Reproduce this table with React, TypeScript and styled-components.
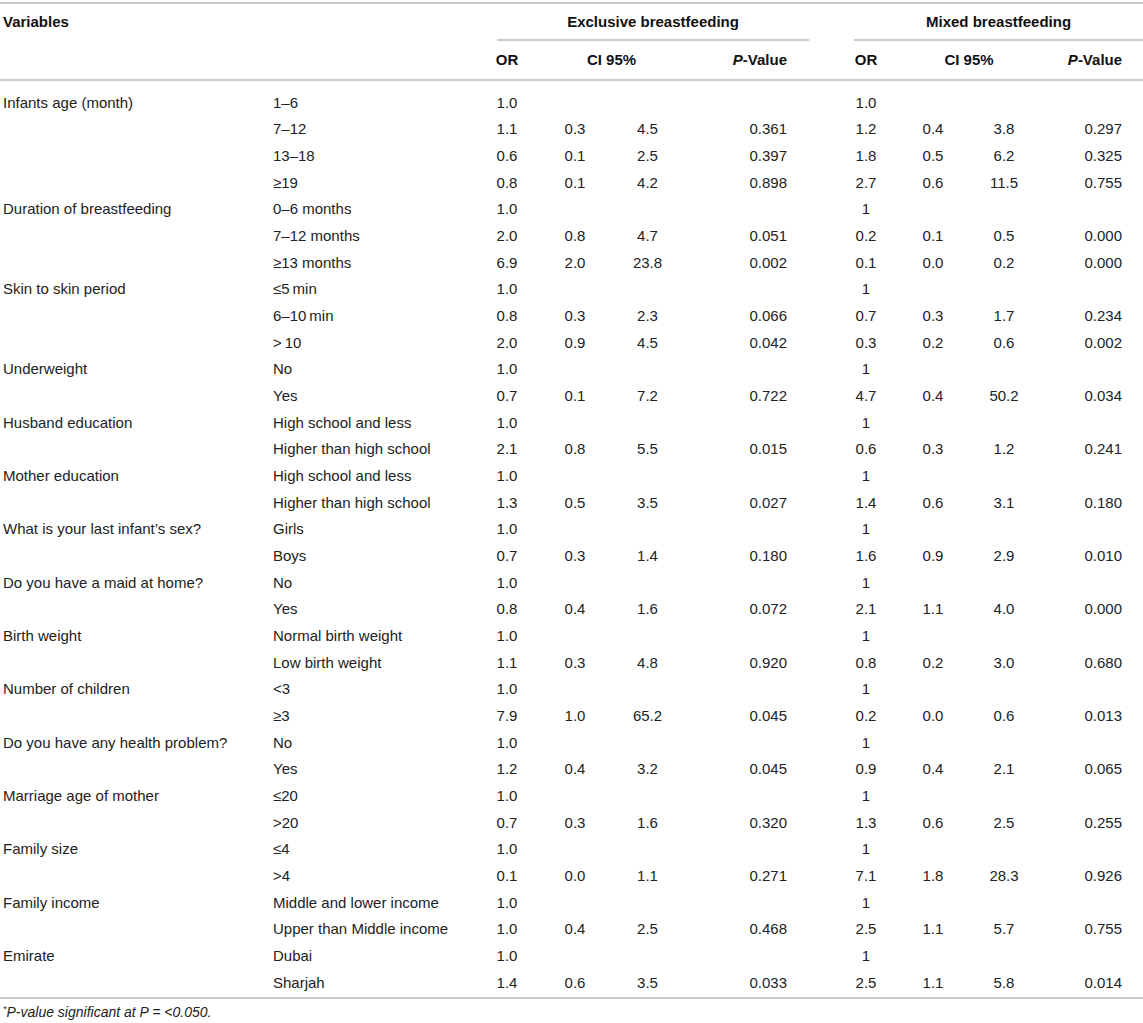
import React from 'react';
import styled, { createGlobalStyle } from 'styled-components';

type Align = 'left' | 'center' | 'right';

interface Row {
  cat: string;
  ex: string[];
  mx: string[];
}

interface Group {
  label: string;
  rows: Row[];
}

// "1.0" alone means reference category (only OR shown)
const r = (cat: string, ex: string, mx: string): Row => ({
  cat,
  ex: ex.split(' '),
  mx: mx.split(' '),
});

const groups: Group[] = [
  {
    label: 'Infants age (month)',
    rows: [
      r('1–6', '1.0', '1.0'),
      r('7–12', '1.1 0.3 4.5 0.361', '1.2 0.4 3.8 0.297'),
      r('13–18', '0.6 0.1 2.5 0.397', '1.8 0.5 6.2 0.325'),
      r('≥19', '0.8 0.1 4.2 0.898', '2.7 0.6 11.5 0.755'),
    ],
  },
  {
    label: 'Duration of breastfeeding',
    rows: [
      r('0–6 months', '1.0', '1'),
      r('7–12 months', '2.0 0.8 4.7 0.051', '0.2 0.1 0.5 0.000'),
      r('≥13 months', '6.9 2.0 23.8 0.002', '0.1 0.0 0.2 0.000'),
    ],
  },
  {
    label: 'Skin to skin period',
    rows: [
      r('≤5\u2009min', '1.0', '1'),
      r('6–10\u2009min', '0.8 0.3 2.3 0.066', '0.7 0.3 1.7 0.234'),
      r('>\u200910', '2.0 0.9 4.5 0.042', '0.3 0.2 0.6 0.002'),
    ],
  },
  {
    label: 'Underweight',
    rows: [r('No', '1.0', '1'), r('Yes', '0.7 0.1 7.2 0.722', '4.7 0.4 50.2 0.034')],
  },
  {
    label: 'Husband education',
    rows: [
      r('High school and less', '1.0', '1'),
      r('Higher than high school', '2.1 0.8 5.5 0.015', '0.6 0.3 1.2 0.241'),
    ],
  },
  {
    label: 'Mother education',
    rows: [
      r('High school and less', '1.0', '1'),
      r('Higher than high school', '1.3 0.5 3.5 0.027', '1.4 0.6 3.1 0.180'),
    ],
  },
  {
    label: 'What is your last infant’s sex?',
    rows: [r('Girls', '1.0', '1'), r('Boys', '0.7 0.3 1.4 0.180', '1.6 0.9 2.9 0.010')],
  },
  {
    label: 'Do you have a maid at home?',
    rows: [r('No', '1.0', '1'), r('Yes', '0.8 0.4 1.6 0.072', '2.1 1.1 4.0 0.000')],
  },
  {
    label: 'Birth weight',
    rows: [
      r('Normal birth weight', '1.0', '1'),
      r('Low birth weight', '1.1 0.3 4.8 0.920', '0.8 0.2 3.0 0.680'),
    ],
  },
  {
    label: 'Number of children',
    rows: [r('<3', '1.0', '1'), r('≥3', '7.9 1.0 65.2 0.045', '0.2 0.0 0.6 0.013')],
  },
  {
    label: 'Do you have any health problem?',
    rows: [r('No', '1.0', '1'), r('Yes', '1.2 0.4 3.2 0.045', '0.9 0.4 2.1 0.065')],
  },
  {
    label: 'Marriage age of mother',
    rows: [r('≤20', '1.0', '1'), r('>20', '0.7 0.3 1.6 0.320', '1.3 0.6 2.5 0.255')],
  },
  {
    label: 'Family size',
    rows: [r('≤4', '1.0', '1'), r('>4', '0.1 0.0 1.1 0.271', '7.1 1.8 28.3 0.926')],
  },
  {
    label: 'Family income',
    rows: [
      r('Middle and lower income', '1.0', '1'),
      r('Upper than Middle income', '1.0 0.4 2.5 0.468', '2.5 1.1 5.7 0.755'),
    ],
  },
  {
    label: 'Emirate',
    rows: [r('Dubai', '1.0', '1'), r('Sharjah', '1.4 0.6 3.5 0.033', '2.5 1.1 5.8 0.014')],
  },
];

const widths = [270, 205, 64, 72, 73, 150, 64, 70, 72, 103];
const exclusiveCols: { align: Align; padR: number }[] = [
  { align: 'center', padR: 0 },
  { align: 'center', padR: 0 },
  { align: 'center', padR: 0 },
  { align: 'right', padR: 47 },
];
const mixedCols: { align: Align; padR: number }[] = [
  { align: 'center', padR: 0 },
  { align: 'center', padR: 0 },
  { align: 'center', padR: 0 },
  { align: 'right', padR: 21 },
];

const App = () => {
  const total = groups.reduce((n, g) => n + g.rows.length, 0);
  let idx = 0;
  return (
    <Page>
      <GlobalStyle />
      <Table>
        <colgroup>
          {widths.map((w, i) => (
            <Col key={i} $w={w} />
          ))}
        </colgroup>
        <thead>
          <tr>
            <VarHead rowSpan={2} colSpan={2}>Variables</VarHead>
            <TopCell colSpan={4}>
              <GroupTitle $from={22} $to={25}>Exclusive breastfeeding</GroupTitle>
            </TopCell>
            <TopCell colSpan={4}>
              <GroupTitle $from={20} $to={0}>Mixed breastfeeding</GroupTitle>
            </TopCell>
          </tr>
          <tr>
            <SubHead $align="center">OR</SubHead>
            <SubHead $align="center" colSpan={2}>CI 95%</SubHead>
            <SubHead $align="right" $padR={47}>
              <i>P</i>-Value
            </SubHead>
            <SubHead $align="center">OR</SubHead>
            <SubHead $align="center" colSpan={2}>CI 95%</SubHead>
            <SubHead $align="right" $padR={21}>
              <i>P</i>-Value
            </SubHead>
          </tr>
        </thead>
        <tbody>
          {groups.map((g) =>
            g.rows.map((row, ri) => {
              const first = idx === 0;
              const last = idx === total - 1;
              idx += 1;
              return (
                <tr key={g.label + row.cat}>
                  <Cell $align="left" $padL={3} $first={first} $last={last}>
                    {ri === 0 ? g.label : ''}
                  </Cell>
                  <Cell $align="left" $padL={3} $first={first} $last={last}>
                    {row.cat}
                  </Cell>
                  {exclusiveCols.map((c, ci) => (
                    <Cell key={'e' + ci} $align={c.align} $padR={c.padR} $first={first} $last={last}>
                      {row.ex[ci] ?? ''}
                    </Cell>
                  ))}
                  {mixedCols.map((c, ci) => (
                    <Cell key={'m' + ci} $align={c.align} $padR={c.padR} $first={first} $last={last}>
                      {row.mx[ci] ?? ''}
                    </Cell>
                  ))}
                </tr>
              );
            })
          )}
        </tbody>
      </Table>
      <Note>
        <Star>*</Star>P-value significant at P = &lt;0.050.
      </Note>
    </Page>
  );
};

export default App;

const line = '#c9c9c9';

const GlobalStyle = createGlobalStyle`
  body {
    margin: 0;
    background: #fff;
  }
`;

const Page = styled.div`
  width: 1143px;
  padding-top: 2px;
  font-family: 'Liberation Sans', Arial, sans-serif;
  color: #222;
`;

const Table = styled.table`
  width: 1143px;
  table-layout: fixed;
  border-collapse: separate;
  border-spacing: 0;
  font-size: 15px;
`;

const Col = styled.col<{ $w: number }>`
  width: ${(p) => p.$w}px;
`;

const VarHead = styled.th`
  padding: 8px 0 0 3px;
  line-height: 20px;
  text-align: left;
  vertical-align: top;
  font-weight: bold;
  color: #111;
  border-top: 2px solid ${line};
  border-bottom: 2px solid ${line};
`;

const TopCell = styled.th`
  padding: 0;
  vertical-align: top;
  border-top: 2px solid ${line};
`;

const GroupTitle = styled.div<{ $from: number; $to: number }>`
  height: 35px;
  margin: 0 ${(p) => p.$to}px 0 ${(p) => p.$from}px;
  display: flex;
  align-items: center;
  justify-content: center;
  font-weight: bold;
  color: #111;
  border-bottom: 2px solid ${line};
  white-space: nowrap;
`;

const SubHead = styled.th<{ $align: Align; $padR?: number }>`
  padding: 0 ${(p) => p.$padR ?? 0}px 0 0;
  line-height: 38px;
  text-align: ${(p) => p.$align};
  font-weight: bold;
  color: #111;
  white-space: nowrap;
  border-bottom: 2px solid ${line};
`;

const Cell = styled.td<{ $align: Align; $padL?: number; $padR?: number; $first?: boolean; $last?: boolean }>`
  padding: ${(p) => (p.$first ? '8.67px' : '0')} ${(p) => p.$padR ?? 0}px 0 ${(p) => p.$padL ?? 0}px;
  line-height: 26.667px;
  text-align: ${(p) => p.$align};
  white-space: nowrap;
  border-bottom: ${(p) => (p.$last ? `2px solid ${line}` : 'none')};
`;

const Note = styled.p`
  margin: 0;
  padding: 3px 0 0 3px;
  font-size: 14px;
  line-height: 20px;
  font-style: italic;
`;

const Star = styled.sup`
  font-size: 9px;
  line-height: 0;
  vertical-align: 5px;
`;
